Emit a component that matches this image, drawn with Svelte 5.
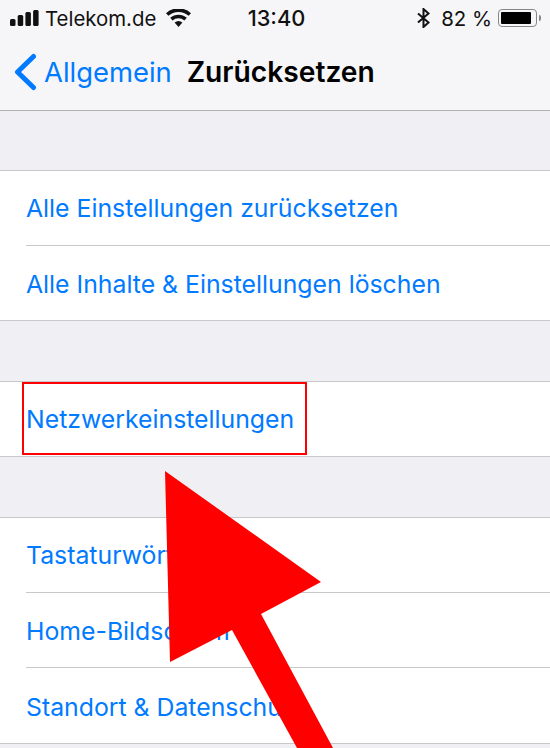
<script>
  const groups = [
    ["Alle Einstellungen zurücksetzen", "Alle Inhalte & Einstellungen löschen"],
    ["Netzwerkeinstellungen"],
    ["Tastaturwörterbuch", "Home-Bildschirm", "Standort & Datenschutz"]
  ];
</script>

<div class="screen">
  <header>
    <div class="status">
      <div class="side">
        <svg class="signal" width="29" height="16" viewBox="0 0 29 16">
          <rect x="0" y="9" width="5.5" height="7" rx="1.5" />
          <rect x="7.7" y="5" width="5.5" height="11" rx="1.5" />
          <rect x="15.4" y="2" width="5.5" height="14" rx="1.5" />
          <rect x="23.1" y="0" width="5.5" height="16" rx="1.5" />
        </svg>
        <span class="carrier">Telekom.de</span>
        <svg class="wifi" width="25" height="18" viewBox="0 0 25 18">
          <path d="M12.5 18 L8.6 13.6 A6 6 0 0 1 16.4 13.6 Z" />
          <path d="M6.6 11.4 L4.2 8.8 A12.5 12.5 0 0 1 20.8 8.8 L18.4 11.4 A9 9 0 0 0 6.6 11.4 Z" />
          <path d="M2.4 6.8 L0 4.2 A18.5 18.5 0 0 1 25 4.2 L22.6 6.8 A15 15 0 0 0 2.4 6.8 Z" />
        </svg>
      </div>
      <span class="time">13:40</span>
      <div class="side right">
        <svg class="bt" width="13" height="20" viewBox="0 0 13 20">
          <path d="M1 5.5 L11.5 14.5 L6.5 19 V1 L11.5 5.5 L1 14.5" />
        </svg>
        <span class="pct">82 %</span>
        <div class="battery"><div class="level"></div></div>
        <div class="cap"></div>
      </div>
    </div>
    <nav>
      <svg class="chevron" width="24" height="38" viewBox="0 0 24 38">
        <path d="M20.5 3.5 L4.5 19 L20.5 34.5" />
      </svg>
      <span class="back">Allgemein</span>
      <span class="title">Zurücksetzen</span>
    </nav>
  </header>

  {#each groups as rows}
    <section>
      {#each rows as row}
        <div class="row"><span class="label">{row}</span></div>
      {/each}
    </section>
  {/each}

  <div class="highlight"></div>
  <svg class="arrow" width="550" height="748" viewBox="0 0 550 748">
    <polygon points="165,471 321,582 261,614 333,748 297,748 232,630 170,662" />
  </svg>
</div>

<style>
  :global(body) {
    margin: 0;
  }
  .screen {
    position: relative;
    width: 550px;
    height: 748px;
    overflow: hidden;
    background: #efeff4;
    font-family: Inter, "Liberation Sans", sans-serif;
  }
  header {
    height: 110px;
    background: #f6f6f8;
    border-bottom: 1px solid #b2b2b2;
  }
  .status {
    height: 36px;
    padding: 0 9px 0 10px;
    display: grid;
    grid-template-columns: 1fr auto 1fr;
    align-items: center;
    font-size: 20.4px;
    color: #111;
  }
  .side {
    display: flex;
    align-items: center;
  }
  .right {
    justify-content: flex-end;
  }
  .signal {
    fill: #111;
    margin-right: 6px;
  }
  .wifi {
    fill: #111;
    margin-left: 10px;
  }
  .time {
    font-size: 21.8px;
    font-weight: 500;
    margin-left: 2px;
  }
  .bt {
    fill: none;
    stroke: #111;
    stroke-width: 2;
    margin-right: 11px;
  }
  .battery {
    width: 39px;
    height: 18px;
    margin-left: 6px;
    padding: 2px;
    box-sizing: border-box;
    border: 1.5px solid #888;
    border-radius: 4px;
  }
  .level {
    width: 92%;
    height: 100%;
    background: #000;
    border-radius: 1px;
  }
  .cap {
    width: 2px;
    height: 6px;
    margin-left: 2px;
    background: #888;
    border-radius: 0 2px 2px 0;
  }
  nav {
    height: 74px;
    box-sizing: border-box;
    padding: 0 0 2px 13px;
    display: flex;
    align-items: center;
    font-size: 27.4px;
  }
  .chevron {
    fill: none;
    stroke: #007aff;
    stroke-width: 5;
    stroke-linecap: round;
    stroke-linejoin: round;
    margin-right: 7px;
  }
  .back {
    color: #007aff;
    margin-right: 15px;
  }
  .title {
    color: #000;
    font-size: 28.2px;
    font-weight: 600;
  }
  section {
    margin-top: 60px;
    background: #fff;
    border-top: 1px solid #c8c7cc;
    border-bottom: 1px solid #c8c7cc;
    padding-left: 26px;
  }
  header + section {
    margin-top: 59px;
  }
  .row {
    height: 74px;
    display: flex;
    align-items: center;
    border-top: 1px solid #c8c7cc;
    font-size: 24.8px;
    color: #007aff;
  }
  .row:first-child {
    border-top: none;
  }
  .row:not(:first-child) {
    box-sizing: border-box;
    height: 75px;
    padding-top: 2px;
  }
  section:last-of-type .row:last-child {
    height: 76px;
  }
  .highlight {
    position: absolute;
    left: 22px;
    top: 382px;
    width: 285px;
    height: 73px;
    box-sizing: border-box;
    border: 2px solid #f00;
  }
  .arrow {
    position: absolute;
    left: 0;
    top: 0;
    fill: #f00;
  }
</style>
